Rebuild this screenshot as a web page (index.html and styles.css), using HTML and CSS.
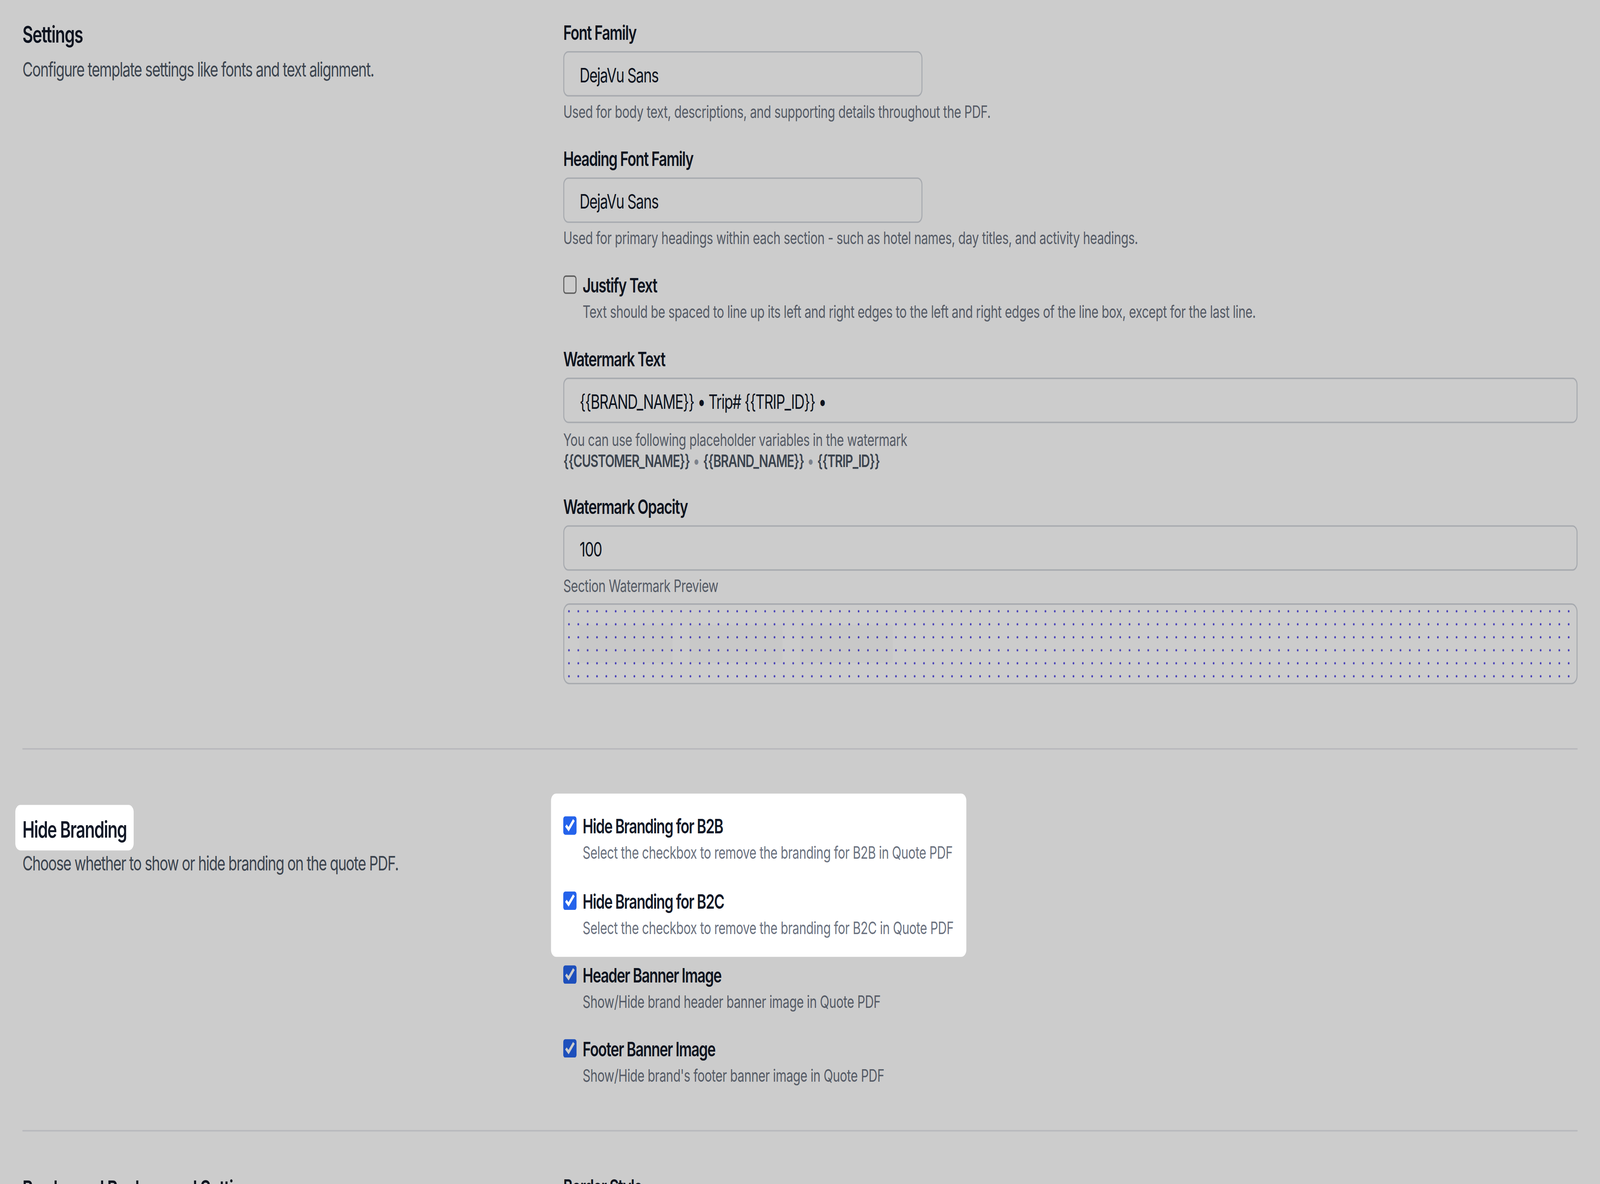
FILE: index.html
```html
<!DOCTYPE html>
<html lang="en">
<head>
    <meta charset="UTF-8">
    <meta name="viewport" content="width=device-width, initial-scale=1.0">
    <title>Template Settings</title>
    <link rel="stylesheet" href="styles.css">
</head>
<body>
    <div class="overlay"></div>

    <main class="page">
        <section class="section section-first">
            <div class="section-info">
                <h2 class="section-title">Settings</h2>
                <p class="section-desc">Configure template settings like fonts and text alignment.</p>
            </div>
            <div class="section-fields">
                <div class="field">
                    <label class="field-label" for="fontFamily">Font Family</label>
                    <input class="input input-short" type="text" id="fontFamily" value="DejaVu Sans">
                    <p class="help">Used for body text, descriptions, and supporting details throughout the PDF.</p>
                </div>
                <div class="field">
                    <label class="field-label" for="headingFont">Heading Font Family</label>
                    <input class="input input-short" type="text" id="headingFont" value="DejaVu Sans">
                    <p class="help">Used for primary headings within each section - such as hotel names, day titles, and activity headings.</p>
                </div>
                <label class="check">
                    <input type="checkbox" class="check-box">
                    <span class="check-text">
                        <span class="check-title">Justify Text</span>
                        <span class="check-desc">Text should be spaced to line up its left and right edges to the left and right edges of the line box, except for the last line.</span>
                    </span>
                </label>
                <div class="field">
                    <label class="field-label" for="watermarkText">Watermark Text</label>
                    <input class="input" type="text" id="watermarkText" value="{{BRAND_NAME}} • Trip# {{TRIP_ID}} •">
                    <p class="help help-tight">You can use following placeholder variables in the watermark<br>
                        <b>{{CUSTOMER_NAME}}</b> <span class="sep">•</span> <b>{{BRAND_NAME}}</b> <span class="sep">•</span> <b>{{TRIP_ID}}</b>
                    </p>
                </div>
                <div class="field">
                    <label class="field-label" for="watermarkOpacity">Watermark Opacity</label>
                    <input class="input" type="text" id="watermarkOpacity" value="100">
                    <p class="help">Section Watermark Preview</p>
                    <div class="preview">
                        <span class="ghost"></span>
                        <span class="ghost"></span>
                        <span class="ghost"></span>
                    </div>
                </div>
            </div>
        </section>

        <section class="section section-branding">
            <div class="section-info">
                <h2 class="section-title spot spot-title">Hide Branding</h2>
                <p class="section-desc">Choose whether to show or hide branding on the quote PDF.</p>
            </div>
            <div class="section-fields">
                <div class="check-group spot spot-group">
                    <label class="check">
                        <input type="checkbox" class="check-box" checked>
                        <span class="check-text">
                            <span class="check-title">Hide Branding for B2B</span>
                            <span class="check-desc">Select the checkbox to remove the branding for B2B in Quote PDF</span>
                        </span>
                    </label>
                    <label class="check">
                        <input type="checkbox" class="check-box" checked>
                        <span class="check-text">
                            <span class="check-title">Hide Branding for B2C</span>
                            <span class="check-desc">Select the checkbox to remove the branding for B2C in Quote PDF</span>
                        </span>
                    </label>
                </div>
                <label class="check">
                    <input type="checkbox" class="check-box" checked>
                    <span class="check-text">
                        <span class="check-title">Header Banner Image</span>
                        <span class="check-desc">Show/Hide brand header banner image in Quote PDF</span>
                    </span>
                </label>
                <label class="check">
                    <input type="checkbox" class="check-box" checked>
                    <span class="check-text">
                        <span class="check-title">Footer Banner Image</span>
                        <span class="check-desc">Show/Hide brand's footer banner image in Quote PDF</span>
                    </span>
                </label>
            </div>
        </section>

        <section class="section section-last">
            <div class="section-info">
                <h2 class="section-title">Border and Background Setting</h2>
                <p class="section-desc">Configure borders and backgrounds of the sections.</p>
            </div>
            <div class="section-fields">
                <div class="field">
                    <label class="field-label" for="borderStyle">Border Style</label>
                    <input class="input input-short" type="text" id="borderStyle" value="Solid">
                </div>
            </div>
        </section>
    </main>

    <script src="script.js"></script>
</body>
</html>
```

FILE: styles.css
```css
/* layout is drawn at 1568 x 834, script.js scales it to the window */
html {
    overflow: hidden;
    background: #ccc;
}
body {
    margin: 0;
    width: 1568px;
    height: 834px;
    overflow: hidden;
    transform-origin: 0 0;
    font-family: Inter, "Noto Sans", sans-serif;
    color: #111827;
    background: #fff;
}

/* tour overlay: dims everything except .spot */
.overlay {
    position: fixed;
    inset: 0;
    background: rgba(0, 0, 0, 0.2);
    z-index: 5;
}
.spot {
    position: relative;
    z-index: 10;
    background: #fff;
    border-radius: 5px;
}

.page {
    padding: 0 22px;
}
.section {
    display: grid;
    grid-template-columns: 498px 1fr;
    column-gap: 32px;
    padding: 30px 0;
    border-bottom: 1px solid #e5e7eb;
}
.section-first {
    padding-top: 12px;
    padding-bottom: 45px;
}
.section-branding {
    padding-top: 43px;
}
.section-last {
    padding-top: 28px;
}
.section-title {
    margin: 0;
    padding-top: 1px;
    font-size: 16px;
    line-height: 22px;
    font-weight: 600;
    letter-spacing: -0.55px;
}
.section-title.spot-title {
    width: fit-content;
    padding: 6px 7px 4px;
    margin: -4px -7px -5px;
}
.section-desc {
    margin: 4px 0 0;
    font-size: 14px;
    line-height: 20px;
    letter-spacing: -0.55px;
    color: #4b5563;
}

.section-fields {
    display: flex;
    flex-direction: column;
    gap: 14px;
}
.field {
    display: flex;
    flex-direction: column;
}
.field-label {
    padding-top: 1px;
    margin-bottom: 3px;
    font-size: 14px;
    line-height: 20px;
    font-weight: 600;
    letter-spacing: -0.55px;
}
.input {
    box-sizing: border-box;
    width: 100%;
    height: 32px;
    padding: 0 15px;
    border: 1px solid #d1d5db;
    border-radius: 5px;
    background: #fff;
    font-family: inherit;
    font-size: 14px;
    letter-spacing: -0.55px;
    color: #111827;
    outline: none;
}
.input-short {
    width: 352px;
}
.help {
    margin: 3px 0 0;
    font-size: 12px;
    line-height: 16px;
    letter-spacing: -0.18px;
    color: #6b7280;
}
.help-tight {
    margin-top: 4px;
    line-height: 15px;
}
.help b {
    font-weight: 600;
    letter-spacing: -0.5px;
    color: #4b5563;
}
.help .sep {
    color: #9ca3af;
}

.preview {
    box-sizing: border-box;
    height: 57px;
    margin-top: 4px;
    border: 1px solid #d1d5db;
    border-radius: 6px;
    display: flex;
    gap: 17px;
    padding: 14px 15px;
    background-image: radial-gradient(circle, #4f46e5 0.6px, transparent 1px);
    background-size: 9.17px 9.17px;
}
.ghost {
    width: 91px;
    background: rgba(0, 0, 0, 0.018);
}

.check-group {
    display: flex;
    flex-direction: column;
    gap: 15px;
}
.check-group.spot-group {
    align-self: flex-start;
    padding: 12px;
    margin: -12px;
}
.check {
    display: flex;
    align-items: flex-start;
    gap: 6px;
}
.check-box {
    width: 13px;
    height: 13px;
    margin: 4px 0 0;
    accent-color: #2563eb;
}
.check-text {
    display: flex;
    flex-direction: column;
}
.check-title {
    padding-top: 1px;
    font-size: 14px;
    line-height: 20px;
    font-weight: 600;
    letter-spacing: -0.55px;
}
.check-desc {
    margin-top: 1px;
    font-size: 12px;
    line-height: 16px;
    letter-spacing: -0.18px;
    color: #6b7280;
}
```

FILE: script.js
```js
// stretch the 1568 x 834 page over the whole window
function fitPage() {
    var sx = window.innerWidth / 1568;
    var sy = window.innerHeight / 834;
    document.body.style.transform = 'scale(' + sx + ', ' + sy + ')';
}

fitPage();
```
